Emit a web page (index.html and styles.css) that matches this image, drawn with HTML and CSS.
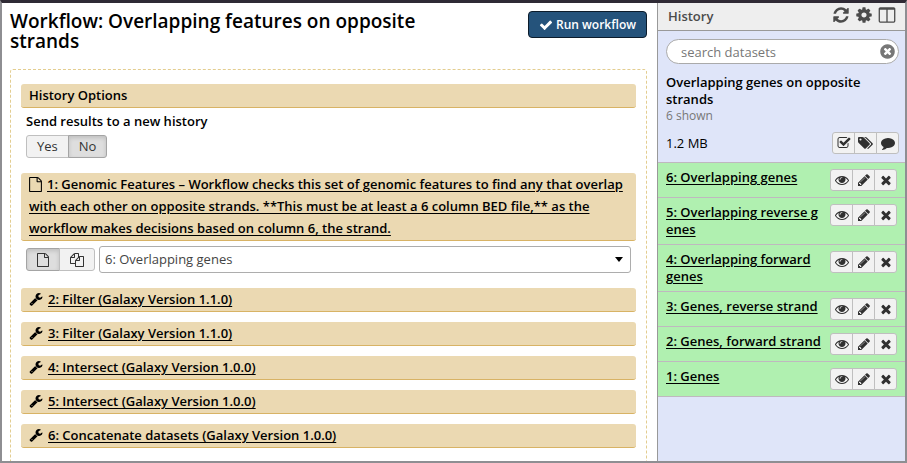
FILE: index.html
```html
<!DOCTYPE html>
<html lang="en">
<head>
<meta charset="utf-8">
<title>Workflow</title>
<link rel="stylesheet" href="styles.css">
</head>
<body>
<svg class="sprite" aria-hidden="true">
  <symbol id="check" viewBox="0 0 1792 1792"><path d="M1671 566q0 40-28 68l-724 724-136 136q-28 28-68 28t-68-28l-136-136-362-362q-28-28-28-68t28-68l136-136q28-28 68-28t68 28l294 295 656-657q28-28 68-28t68 28l136 136q28 28 28 68z"/></symbol>
  <symbol id="refresh" viewBox="0 0 1792 1792"><path d="M1639 1056q0 5-1 7-64 268-268 434.500t-478 166.500q-146 0-282.500-55t-243.500-157l-129 129q-19 19-45 19t-45-19-19-45v-448q0-26 19-45t45-19h448q26 0 45 19t19 45-19 45l-137 137q71 66 161 102t187 36q134 0 250-65t186-179q11-17 53-117 8-23 30-23h192q13 0 22.500 9.500t9.500 22.500zm25-800v448q0 26-19 45t-45 19h-448q-26 0-45-19t-19-45 19-45l138-138q-148-137-349-137-134 0-250 65t-186 179q-11 17-53 117-8 23-30 23h-199q-13 0-22.500-9.500t-9.500-22.500v-7q65-268 270-434.500t480-166.500q146 0 284 55.500t245 156.500l130-129q19-19 45-19t45 19 19 45z"/></symbol>
  <symbol id="cog" viewBox="0 0 1792 1792"><path d="M1152 896q0-106-75-181t-181-75-181 75-75 181 75 181 181 75 181-75 75-181zm512-109v222q0 12-8 23t-20 13l-185 28q-19 54-39 91 35 50 107 138 10 12 10 25t-9 23q-27 37-99 108t-94 71q-12 0-26-9l-138-108q-44 23-91 38-16 136-29 186-7 28-36 28h-222q-14 0-24.500-8.500t-11.500-21.500l-28-184q-49-16-90-37l-141 107q-10 9-25 9-14 0-25-11-126-114-165-168-7-10-7-23 0-12 8-23 15-21 51-66.500t54-70.500q-27-50-41-99l-183-27q-13-2-21-12.500t-8-23.500v-222q0-12 8-23t19-13l186-28q14-46 39-92-40-57-107-138-10-12-10-24 0-10 9-23 26-36 98.500-107.500t94.500-71.500q13 0 26 10l138 107q44-23 91-38 16-136 29-186 7-28 36-28h222q14 0 24.500 8.500t11.500 21.500l28 184q49 16 90 37l142-107q9-9 24-9 13 0 25 10 129 119 165 170 7 8 7 22 0 12-8 23-15 21-51 66.500t-54 70.500q26 50 41 98l183 28q13 2 21 12.500t8 23.500z"/></symbol>
  <symbol id="columns" viewBox="0 0 1792 1792"><path d="M224 1536h608v-1152h-640v1120q0 13 9.500 22.500t22.500 9.500zm1376-32v-1120h-640v1152h608q13 0 22.500-9.500t9.500-22.500zm128-1216v1216q0 66-47 113t-113 47h-1344q-66 0-113-47t-47-113v-1216q0-66 47-113t113-47h1344q66 0 113 47t47 113z"/></symbol>
  <symbol id="file" viewBox="128 0 1536 1792"><path d="M1596 380q28 28 48 76t20 88v1152q0 40-28 68t-68 28h-1344q-40 0-68-28t-28-68v-1600q0-40 28-68t68-28h896q40 0 88 20t76 48zm-444-244v376h376q-10-29-22-41l-313-313q-12-12-41-22zm384 1528v-1024h-416q-40 0-68-28t-28-68v-416h-768v1536h1280z"/></symbol>
  <symbol id="files" viewBox="0 0 1792 1792"><path d="M1696 384q40 0 68 28t28 68v1216q0 40-28 68t-68 28h-960q-40 0-68-28t-28-68v-288h-544q-40 0-68-28t-28-68v-672q0-40 20-88t48-76l408-408q28-28 76-48t88-20h416q40 0 68 28t28 68v328q68-40 128-40h416zm-544 213l-299 299h299v-299zm-640-384l-299 299h299v-299zm196 647l316-316v-416h-384v416q0 40-28 68t-68 28h-416v640h512v-256q0-40 20-88t48-76zm956 804v-1152h-384v416q0 40-28 68t-68 28h-416v640h896z"/></symbol>
  <symbol id="wrench" viewBox="0 0 1792 1792"><path d="M448 1472q0-26-19-45t-45-19-45 19-19 45 19 45 45 19 45-19 19-45zm644-420l-682 682q-37 37-90 37-52 0-91-37l-106-108q-38-36-38-90 0-53 38-91l681-681q39 98 114.500 173.500t173.500 114.500zm634-435q0 39-23 106-47 134-164.500 217.500t-258.500 83.500q-185 0-316.500-131.500t-131.500-316.500 131.500-316.500 316.500-131.500q58 0 121.500 16.500t107.500 46.500q16 11 16 28t-16 28l-293 169v224l193 107q5-3 79-48.500t135.500-81 70.500-35.500q15 0 23.500 10t8.500 25z"/></symbol>
  <symbol id="eye" viewBox="0 0 1792 1792"><path d="M1664 960q-152-236-381-353 61 104 61 225 0 185-131.500 316.500t-316.500 131.500-316.500-131.500-131.500-316.500q0-121 61-225-229 117-381 353 133 205 333.500 326.500t434.500 121.500 434.500-121.500 333.500-326.500zm-720-384q0-20-14-34t-34-14q-125 0-214.500 89.500t-89.500 214.500q0 20 14 34t34 14 34-14 14-34q0-86 61-147t147-61q20 0 34-14t14-34zm848 384q0 34-20 69-140 230-376.500 368.500t-499.500 138.500-499.500-139-376.500-368q-20-35-20-69t20-69q140-229 376.500-368t499.500-139 499.500 139 376.500 368q20 35 20 69z"/></symbol>
  <symbol id="pencil" viewBox="0 0 1792 1792"><path d="M491 1536l91-91-235-235-91 91v107h128v128h107zm523-928q0-22-22-22-10 0-17 7l-542 542q-7 7-7 17 0 22 22 22 10 0 17-7l542-542q7-7 7-17zm-54-192l416 416-832 832h-416v-416zm683 96q0 53-37 90l-166 166-416-416 166-165q36-38 90-38 53 0 91 38l235 234q37 39 37 91z"/></symbol>
  <symbol id="times" viewBox="0 0 1792 1792"><path d="M1490 1322q0 40-28 68l-136 136q-28 28-68 28t-68-28l-294-294-294 294q-28 28-68 28t-68-28l-136-136q-28-28-28-68t28-68l294-294-294-294q-28-28-28-68t28-68l136-136q28-28 68-28t68 28l294 294 294-294q28-28 68-28t68 28l136 136q28 28 28 68t-28 68l-294 294 294 294q28 28 28 68z"/></symbol>
  <symbol id="check-square" viewBox="0 0 1792 1792"><path d="M1472 930v318q0 119-84.500 203.500t-203.500 84.500h-832q-119 0-203.500-84.500t-84.500-203.500v-832q0-119 84.500-203.500t203.500-84.500h832q63 0 117 25 15 7 18 23 3 17-9 29l-49 49q-10 10-23 10-3 0-9-2-23-6-45-6h-832q-66 0-113 47t-47 113v832q0 66 47 113t113 47h832q66 0 113-47t47-113v-254q0-13 9-22l64-64q10-10 23-10 6 0 12 3 20 8 20 29zm231-489l-814 814q-24 24-57 24t-57-24l-430-430q-24-24-24-57t24-57l110-110q24-24 57-24t57 24l263 263 647-647q24-24 57-24t57 24l110 110q24 24 24 57t-24 57z"/></symbol>
  <symbol id="tags" viewBox="0 0 1920 1792"><path d="M448 448q0-53-37.500-90.500t-90.500-37.500-90.500 37.500-37.500 90.500 37.500 90.500 90.500 37.500 90.500-37.500 37.500-90.500zm1067 576q0 53-37 90l-491 492q-39 37-91 37-53 0-90-37l-715-716q-38-37-64.500-101t-26.500-117v-416q0-52 38-90t90-38h416q53 0 117 26.500t102 64.500l715 714q37 39 37 91zm384 0q0 53-37 90l-491 492q-39 37-91 37-36 0-59-14t-53-45l470-470q37-37 37-90 0-52-37-91l-715-714q-38-38-102-64.500t-117-26.500h224q53 0 117 26.500t102 64.500l715 714q37 39 37 91z"/></symbol>
  <symbol id="comment" viewBox="0 0 1792 1792"><path d="M1792 896q0 174-120 321.500t-326 233-450 85.500q-70 0-145-8-198 175-460 242-49 14-114 22-17 2-30.500-9t-17.500-29v-1q-3-4-.5-12t2-10 4.500-9.500l6-9 7-8.500 8-9q7-8 31-34.500t34.500-38 31-39.500 32.500-51 27-59 26-76q-157-89-247.500-220t-90.500-281q0-130 71-248.500t191-204.500 286-136.500 348-50.500q244 0 450 85.500t326 233 120 321.500z"/></symbol>
  <symbol id="times-circle" viewBox="0 0 1792 1792"><path d="M1277 1122q0-26-19-45l-181-181 181-181q19-19 19-45 0-27-19-46l-90-90q-19-19-46-19-26 0-45 19l-181 181-181-181q-19-19-45-19-27 0-46 19l-90 90q-19 19-19 46 0 26 19 45l181 181-181 181q-19 19-19 45 0 27 19 46l90 90q19 19 46 19 26 0 45-19l181-181 181 181q19 19 45 19 27 0 46-19l90-90q19-19 19-46zm387-226q0 209-103 385.500t-279.500 279.500-385.500 103-385.500-103-279.500-279.500-103-385.500 103-385.500 279.500-279.500 385.500-103 385.500 103 279.500 279.500 103 385.500z"/></symbol>
</svg>

<div class="app">
  <main class="center">
    <header class="page-head">
      <h1>Workflow: Overlapping features on opposite strands</h1>
      <button class="run" type="button"><svg class="icon"><use href="#check"/></svg>Run workflow</button>
    </header>
    <form class="workflow">
      <section class="step">
        <h2 class="bar">History Options</h2>
        <fieldset class="options">
          <legend>Send results to a new history</legend>
          <div class="group">
            <button class="toggle" type="button">Yes</button>
            <button class="toggle on" type="button" aria-pressed="true">No</button>
          </div>
        </fieldset>
      </section>
      <section class="step">
        <h2 class="bar"><svg class="icon doc"><use href="#file"/></svg><a href="#">1: Genomic Features – Workflow checks this set of genomic features to find any that overlap with each other on opposite strands. **This must be at least a 6 column BED file,** as the workflow makes decisions based on column 6, the strand.</a></h2>
        <div class="data-input">
          <div class="group">
            <button class="toggle on" type="button" aria-label="Single dataset" aria-pressed="true"><svg class="icon"><use href="#file"/></svg></button>
            <button class="toggle" type="button" aria-label="Multiple datasets"><svg class="icon wide"><use href="#files"/></svg></button>
          </div>
          <div class="picker">
            <select aria-label="Dataset"><option>6: Overlapping genes</option></select>
          </div>
        </div>
      </section>
      <h2 class="bar"><svg class="icon tool"><use href="#wrench"/></svg><a href="#">2: Filter (Galaxy Version 1.1.0)</a></h2>
      <h2 class="bar"><svg class="icon tool"><use href="#wrench"/></svg><a href="#">3: Filter (Galaxy Version 1.1.0)</a></h2>
      <h2 class="bar"><svg class="icon tool"><use href="#wrench"/></svg><a href="#">4: Intersect (Galaxy Version 1.0.0)</a></h2>
      <h2 class="bar"><svg class="icon tool"><use href="#wrench"/></svg><a href="#">5: Intersect (Galaxy Version 1.0.0)</a></h2>
      <h2 class="bar"><svg class="icon tool"><use href="#wrench"/></svg><a href="#">6: Concatenate datasets (Galaxy Version 1.0.0)</a></h2>
    </form>
  </main>

  <aside class="history">
    <header class="history-head">
      <h2>History</h2>
      <nav>
        <a href="#" aria-label="Refresh history"><svg class="icon"><use href="#refresh"/></svg></a>
        <a href="#" aria-label="History options"><svg class="icon"><use href="#cog"/></svg></a>
        <a href="#" aria-label="View all histories"><svg class="icon"><use href="#columns"/></svg></a>
      </nav>
    </header>
    <div class="summary">
      <div class="search">
        <input type="text" placeholder="search datasets" aria-label="search datasets">
        <button type="button" aria-label="Clear search"><svg class="icon"><use href="#times-circle"/></svg></button>
      </div>
      <h3>Overlapping genes on opposite strands</h3>
      <p class="shown">6 shown</p>
      <div class="size-row">
        <span>1.2 MB</span>
        <div class="group">
          <button class="tiny" type="button" aria-label="Select datasets"><svg class="icon"><use href="#check-square"/></svg></button>
          <button class="tiny" type="button" aria-label="Edit tags"><svg class="icon tag"><use href="#tags"/></svg></button>
          <button class="tiny" type="button" aria-label="Edit annotation"><svg class="icon"><use href="#comment"/></svg></button>
        </div>
      </div>
    </div>
    <ul class="datasets"></ul>
  </aside>
</div>
<script src="history.js"></script>
</body>
</html>
```
FILE: history.js
```js
const datasets = [
  "6: Overlapping genes",
  "5: Overlapping reverse&nbsp;g<wbr>enes",
  "4: Overlapping forward genes",
  "3: Genes, reverse strand",
  "2: Genes, forward strand",
  "1: Genes"
];
const actions = [["eye", "View data"], ["pencil", "Edit attributes"], ["times", "Delete"]];

document.querySelector(".datasets").innerHTML = datasets.map(name => `
  <li><a href="#">${name}</a><div class="group">${actions.map(([icon, label]) =>
    `<button class="tiny" type="button" aria-label="${label}"><svg class="icon"><use href="#${icon}"/></svg></button>`
  ).join("")}</div></li>`).join("");
```
FILE: styles.css
```css
* { box-sizing: border-box; }

body {
  margin: 0;
  font: 13px/17px "Open Sans", "Noto Sans", sans-serif;
  color: #000;
}

h1, h2, h3, p, ul { margin: 0; padding: 0; }
h1, h2, h3, legend { font-size: 13px; font-weight: 600; }
a { color: inherit; text-underline-offset: 2px; }
button, input, select { font: inherit; color: inherit; }

.sprite { display: none; }
.icon { display: block; width: 14px; height: 14px; fill: currentColor; flex: none; }

.app {
  display: grid;
  grid-template-columns: 1fr 248px;
  height: 100vh;
  border: 2px solid #8e8e92;
  border-top: 3px solid #2f2a35;
  overflow: hidden;
}

/* Centre panel */
.center { padding: 8px 10px 0 8px; overflow: hidden; }

.page-head {
  display: flex;
  justify-content: space-between;
  align-items: flex-start;
  gap: 100px;
  height: 58px;
}
.page-head h1 { font-size: 19px; line-height: 20px; }

.run {
  display: flex;
  align-items: center;
  gap: 3px;
  flex: none;
  height: 27px;
  padding: 0 10px;
  border: 1px solid #0c1c2b;
  border-radius: 4px;
  background: #25537b;
  color: #fff;
  font-size: 12px;
  font-weight: 600;
}

.workflow {
  display: flex;
  flex-direction: column;
  gap: 10px;
  padding: 14px 10px 30px;
  border: 1px dashed #e3cd90;
  border-radius: 3px;
}
.step { margin-bottom: 5px; }

.bar {
  padding: 0 8px 1px;
  border: 0 solid #d8b365;
  border-bottom-width: 1px;
  border-radius: 3px;
  background: #ebd9b2;
  line-height: 22px;
}
.bar .icon { display: inline-block; vertical-align: -2px; margin-right: 5px; }
.bar .doc { width: 13px; height: 15px; vertical-align: -3px; }

.options { margin: 0; padding: 0 5px; border: 0; }
.options legend { padding: 5px 0 0; margin-bottom: 5px; }

.group { display: flex; }
.group button {
  display: flex;
  align-items: center;
  justify-content: center;
  border: 1px solid #bfbfbf;
  background: #f2f2f2;
}
.group button + button { margin-left: -1px; }
.group button:first-child { border-radius: 3px 0 0 3px; }
.group button:last-child { border-radius: 0 3px 3px 0; }

.toggle { height: 23px; padding: 0 10px; color: #333; }
.group .toggle.on {
  border-color: #a4a4a4;
  background: #dedede;
  box-shadow: inset 0 2px 4px rgba(0, 0, 0, .14);
}
.toggle .icon { width: 12px; height: 14px; }
.toggle .wide { width: 14px; }

.data-input { display: flex; align-items: center; gap: 4px; padding: 5px 5px 0; }
.picker { position: relative; flex: 1; }
.picker::after {
  content: "";
  position: absolute;
  top: 11px;
  right: 8px;
  border: 4px solid transparent;
  border-top: 5px solid #000;
  border-bottom: 0;
  pointer-events: none;
}
.picker select {
  display: block;
  width: 100%;
  height: 27px;
  padding: 0 5px;
  border: 1px solid #adadad;
  border-radius: 3px;
  background: #fff;
  color: #444;
  appearance: none;
}

/* History panel */
.history { border-left: 1px solid #999; background: #dfe5f9; }

.history-head {
  display: flex;
  justify-content: space-between;
  align-items: center;
  height: 28px;
  padding: 0 9px 0 10px;
  border-bottom: 1px solid #999;
  background: #eee;
  color: #4b4b4b;
}
.history-head nav { display: flex; gap: 5px; padding-bottom: 3px; }
.history-head .icon { width: 18px; height: 18px; }

.summary { padding: 8px 6px 8px 8px; }

.search { position: relative; margin-bottom: 10px; }
.search input {
  display: block;
  width: 100%;
  height: 25px;
  padding: 0 30px 0 14px;
  border: 1px solid #aaa;
  border-radius: 13px;
  background: #fff;
}
.search input::placeholder { color: #777; opacity: 1; }
.search button {
  position: absolute;
  top: 4px;
  right: 3px;
  padding: 0;
  border: 0;
  background: none;
  color: #777;
}
.search .icon { width: 17px; height: 17px; }

.summary h3 { padding-right: 30px; }
.shown { color: #777; font-size: 12px; line-height: 16px; }
.size-row {
  display: flex;
  justify-content: space-between;
  align-items: center;
  margin-top: 8px;
}

.group .tiny { width: 23px; height: 22px; padding: 0; color: #303030; }
.tag { width: 15px; }

.datasets { list-style: none; border-top: 1px solid #bfb8bf; }
.datasets li {
  display: flex;
  justify-content: space-between;
  align-items: flex-start;
  gap: 4px;
  padding: 6px 8px;
  border-bottom: 1px solid #bfb8bf;
  background: #b0f0b0;
  font-weight: 600;
}
```
